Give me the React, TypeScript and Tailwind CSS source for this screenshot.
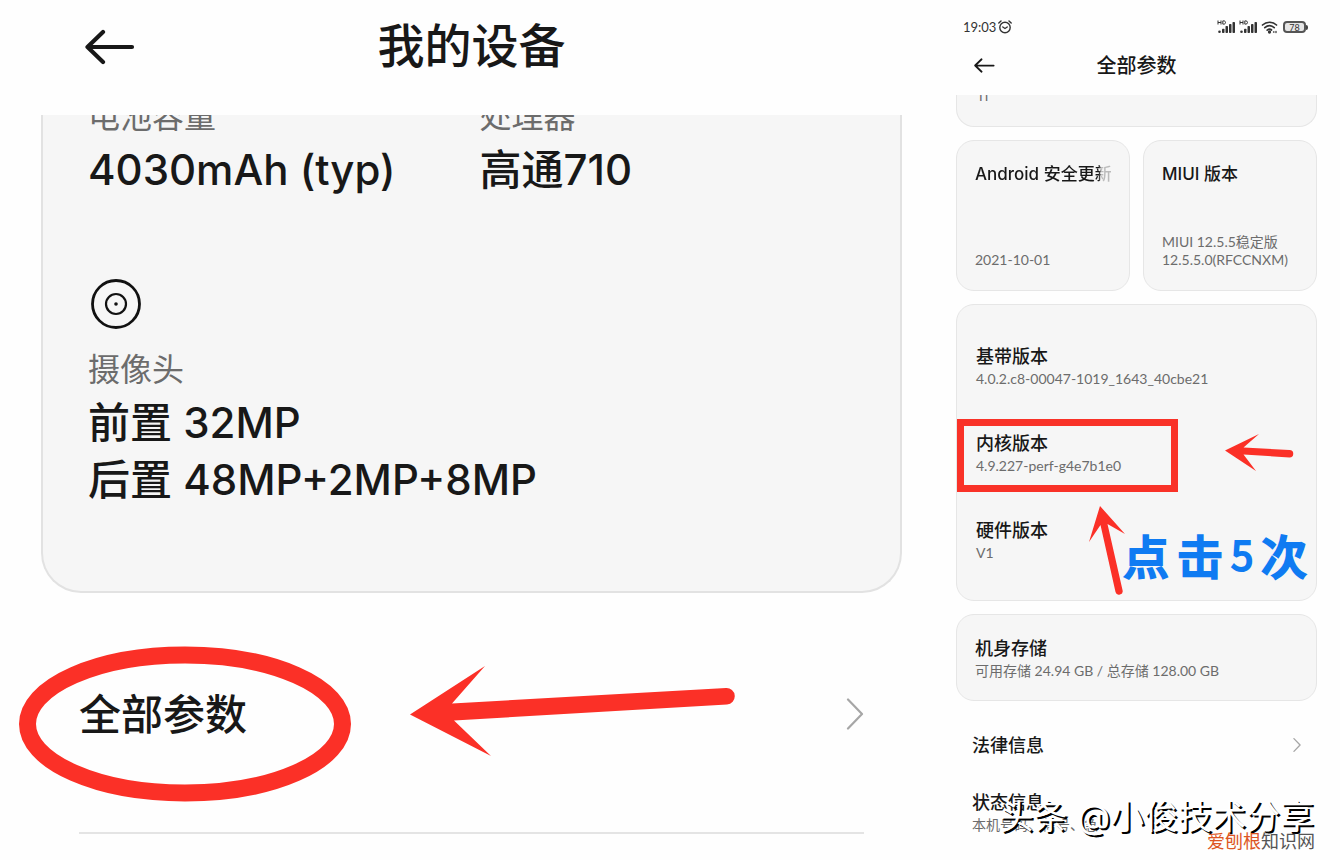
import type { ReactNode } from 'react'

const card = 'border border-[#e6e6e6] bg-[#f6f6f6]'

function BackArrow({ className }: { className: string }) {
  return (
    <svg viewBox="0 0 50 36" className={className} fill="none" stroke="currentColor" strokeWidth="4.200" strokeLinecap="round" strokeLinejoin="round" aria-hidden="true">
      <path d="M47 18H3M18 3L2.500 18L18 33" />
    </svg>
  )
}

function Chevron({ className, strokeWidth }: { className: string; strokeWidth: number }) {
  return (
    <svg viewBox="0 0 18 32" className={className} fill="none" stroke="#a6a6a6" strokeWidth={strokeWidth} strokeLinecap="round" strokeLinejoin="round" aria-hidden="true">
      <path d="M2 1.500L16 16L2 30.500" />
    </svg>
  )
}

function Signal() {
  return (
    <svg viewBox="0 0 19 14" className="h-[14px] w-[19px]" fill="#333" aria-hidden="true">
      <path d="M1 .5v4M4 .5v4M1 2.500h3M5.800 .9h1.200c2 0 2 3.200 0 3.200h-1.200z" fill="none" stroke="#333" strokeWidth="1" />
      <circle cx="2.500" cy="11.700" r="1.300" />
      <rect x="5" y="8.800" width="2.500" height="4.200" rx=".8" />
      <rect x="8.500" y="6" width="2.500" height="7" rx=".8" />
      <rect x="12" y="4" width="2.500" height="9" rx=".8" />
      <rect x="15.500" y="2" width="2.500" height="11" rx=".8" />
    </svg>
  )
}

function Spec({ title, children }: { title: string; children: ReactNode }) {
  return (
    <div>
      <h3 className="text-[18px] leading-6 font-medium text-[#181818]">{title}</h3>
      <p className="text-[14px] leading-[22px] text-[#6c6c6c]">{children}</p>
    </div>
  )
}

function DevicePanel() {
  return (
    <section className="w-[70%] pr-9 pl-[41px]">
      <header className="relative flex h-[115px] items-start justify-center pt-4 text-[#181818]">
        <button aria-label="返回" className="absolute top-[29px] left-11">
          <BackArrow className="h-9 w-[50px]" />
        </button>
        <h1 className="text-[47px] leading-[58px] font-medium">我的设备</h1>
      </header>

      <div className="overflow-hidden rounded-b-[40px] border-2 border-t-0 border-[#e2e2e2] bg-[#f6f6f6] px-[45px] pb-[83px]">
        <div className="-mt-4 grid grid-cols-2 gap-x-4">
          <div>
            <p className="text-[32px] leading-[34px] text-[#6c6c6c]">电池容量</p>
            <p className="mt-2 font-[Inter,'Noto_Sans_CJK_SC',sans-serif] text-[42px] leading-[57px] font-medium text-[#181818]">4030mAh (typ)</p>
          </div>
          <div>
            <p className="text-[32px] leading-[34px] text-[#6c6c6c]">处理器</p>
            <p className="mt-2 font-[Inter,'Noto_Sans_CJK_SC',sans-serif] text-[42px] leading-[57px] font-medium text-[#181818]">高通710</p>
          </div>
        </div>
        <svg viewBox="0 0 50 50" className="mt-[81px] ml-[3px] size-[50px]" fill="none" stroke="#111" aria-hidden="true">
          <circle cx="25" cy="25" r="23.500" strokeWidth="2.800" />
          <circle cx="25" cy="25" r="10" strokeWidth="2.200" />
          <circle cx="25" cy="25" r="1.800" fill="#111" stroke="none" />
        </svg>
        <p className="mt-[23px] text-[32px] leading-[34px] text-[#6c6c6c]">摄像头</p>
        <p className="mt-2 font-[Inter,'Noto_Sans_CJK_SC',sans-serif] text-[42px] leading-[57px] font-medium text-[#181818]">
          前置 32MP
          <br />
          后置 48MP+2MP+8MP
        </p>
      </div>

      <div className="relative mx-[38px] mt-10 h-[201px] border-b-2 border-[#e4e4e4]">
        <a href="#all" className="flex h-[162px] items-center justify-between text-[42px] font-medium text-[#181818]">
          全部参数
          <Chevron className="h-8 w-[18px]" strokeWidth={2.2} />
        </a>
        <svg viewBox="0 0 332 156" className="pointer-events-none absolute top-[13px] left-[-60px] h-[156px] w-[332px]" fill="none" aria-hidden="true">
          <ellipse cx="166" cy="78" rx="157.500" ry="69" stroke="#fb3027" strokeWidth="17" />
        </svg>
        <svg viewBox="0 0 330 92" className="pointer-events-none absolute top-8 left-[330px] h-[92px] w-[330px]" fill="#fb3027" aria-hidden="true">
          <path d="M1 49.500L76 1L43 38.500L317 23A8 8 0 0 1 318 39.500L45 55.500L82 91Z" />
        </svg>
      </div>
    </section>
  )
}

function StatusBar() {
  return (
    <div className="flex h-[14px] items-center justify-between pr-[9px] pl-[7px] text-[#333]">
      <div className="flex items-center gap-[2px]">
        <span className="text-[13px] leading-[14px]">19:03</span>
        <svg viewBox="0 0 14 14" className="size-[14px]" fill="none" stroke="#333" strokeWidth="1.400" strokeLinecap="round" aria-hidden="true">
          <circle cx="7" cy="7.500" r="5.200" />
          <path d="M.8 3L3 1M13.200 3L11 1M4.800 7L7 8.500L9.200 7" />
        </svg>
      </div>
      <div className="flex items-center gap-[3px]">
        <Signal />
        <Signal />
        <svg viewBox="0 0 17 14" className="h-[14px] w-[17px]" fill="none" stroke="#333" strokeWidth="1.700" strokeLinecap="round" aria-hidden="true">
          <path d="M1.500 5C5.500 1.300 11.500 1.300 15.500 5M3.800 7.700C6.700 5.200 10.300 5.200 13.200 7.700M6.200 10.200C7.700 9 9.300 9 10.500 10" />
          <circle cx="8.500" cy="12" r=".8" fill="#333" />
          <path d="M12.500 12h.5M15 11.500v1" strokeWidth="1.300" />
        </svg>
        <div className="ml-[2px] flex items-center">
          <span className="flex h-3 w-[23px] items-center justify-center rounded-[4px] border-2 border-[#555] bg-[#e6e6e6] text-[9px] leading-none">78</span>
          <span className="h-[5px] w-[2px] rounded-r-full bg-[#444]" />
        </div>
      </div>
    </div>
  )
}

function ParamsPanel() {
  return (
    <section className="relative flex-1 pt-5 pr-[23px] pl-[18px]">
      <StatusBar />
      <header className="relative mt-[14px] flex h-[47px] justify-center text-[#181818]">
        <button aria-label="返回" className="absolute top-[10px] left-[18px]">
          <BackArrow className="h-[15px] w-[21px]" />
        </button>
        <h2 className="text-[20px] leading-[34px] font-medium">全部参数</h2>
      </header>

      <div className="h-8 overflow-hidden rounded-b-[18px] border border-t-0 border-[#e6e6e6] bg-[#f6f6f6] px-5">
        <p className="-mt-2 font-[Inter,sans-serif] text-[14px] leading-[18px] text-[#6c6c6c]">11</p>
      </div>

      <div className="mt-[13px] grid grid-cols-2 gap-[13px]">
        <div className={`${card} flex h-[151px] flex-col justify-between rounded-[18px] px-[18px] pt-[21px] pb-[21px]`}>
          <h3 className="overflow-hidden bg-linear-to-r from-[#181818] from-91% to-[#bbb] to-93% bg-clip-text font-[Inter,'Noto_Sans_CJK_SC',sans-serif] text-[17px] leading-6 font-medium whitespace-nowrap text-transparent">Android 安全更新</h3>
          <p className="text-[14px] leading-[18px] text-[#6c6c6c]">2021-10-01</p>
        </div>
        <div className={`${card} flex h-[151px] flex-col justify-between rounded-[18px] px-[18px] pt-[21px] pb-[21px]`}>
          <h3 className="font-[Inter,'Noto_Sans_CJK_SC',sans-serif] text-[17px] leading-6 font-medium text-[#181818]">MIUI 版本</h3>
          <p className="text-[14px] leading-[18px] whitespace-nowrap text-[#6c6c6c]">
            MIUI 12.5.5稳定版
            <br />
            12.5.5.0(RFCCNXM)
          </p>
        </div>
      </div>

      <div className={`${card} relative mt-[13px] flex h-[297px] flex-col gap-[41px] rounded-[18px] px-[19px] pt-[39px]`}>
        <Spec title="基带版本">4.0.2.c8-00047-1019_1643_40cbe21</Spec>
        <Spec title="内核版本">4.9.227-perf-g4e7b1e0</Spec>
        <Spec title="硬件版本">V1</Spec>
        <div className="pointer-events-none absolute top-[114px] left-0 h-[73px] w-[221px] border-[7px] border-[#f93228]" />
        <svg viewBox="0 0 70 38" className="pointer-events-none absolute top-[128px] left-[267px] h-[38px] w-[70px]" fill="#fb3027" aria-hidden="true">
          <path d="M1 17.500L35 1L19.500 14.500L65.500 17A3.700 3.700 0 0 1 65.500 24.500L19.500 21.500L32 38Z" />
        </svg>
        <svg viewBox="0 0 38 90" className="pointer-events-none absolute top-[200px] left-[131px] h-[90px] w-[38px]" fill="#fb3027" aria-hidden="true">
          <path d="M12 1L37 29L19.500 19L34.500 85A3.500 3.500 0 0 1 27.500 87L12.500 20L1 37Z" />
        </svg>
        <p className="pointer-events-none absolute top-[220px] right-[9px] flex h-16 items-center text-[46px] leading-[64px] font-medium text-[#0f7bf2] [-webkit-text-stroke:2px_#0f7bf2]">
          点
          <span className="ml-2">击</span>
          <span className="w-[38px] pb-2 text-center font-['Noto_Sans_CJK_SC'] text-[40px] font-normal">5</span>
          次
        </p>
      </div>

      <div className={`${card} mt-[13px] h-[87px] rounded-[18px] px-[18px] pt-[21px]`}>
        <Spec title="机身存储">可用存储 24.94 GB / 总存储 128.00 GB</Spec>
      </div>

      <a href="#legal" className="mt-8 flex items-center justify-between pr-4 pl-4 text-[18px] leading-6 font-medium text-[#181818]">
        法律信息
        <Chevron className="h-[14px] w-2" strokeWidth={3} />
      </a>
      <div className="mt-[33px] pl-4">
        <Spec title="状态信息">本机号码、信号、急</Spec>
      </div>
      <p className="absolute top-[792px] right-[26px] font-[Inter,'Noto_Sans_CJK_SC',sans-serif] text-[34px] leading-[50px] whitespace-nowrap text-white [text-shadow:2px_2px_0_#000]">头条 @小俊技术分享</p>
      <p className="absolute top-[829px] right-[25px] text-[18px] leading-6 whitespace-nowrap text-[#555]">
        <span className="text-[#dd5523]">爱刨根</span>知识网
      </p>
    </section>
  )
}

export default function App() {
  return (
    <main className="flex min-h-screen overflow-hidden bg-[#fefefe] font-[Lato,'Noto_Sans_CJK_SC',sans-serif]">
      <DevicePanel />
      <ParamsPanel />
    </main>
  )
}
